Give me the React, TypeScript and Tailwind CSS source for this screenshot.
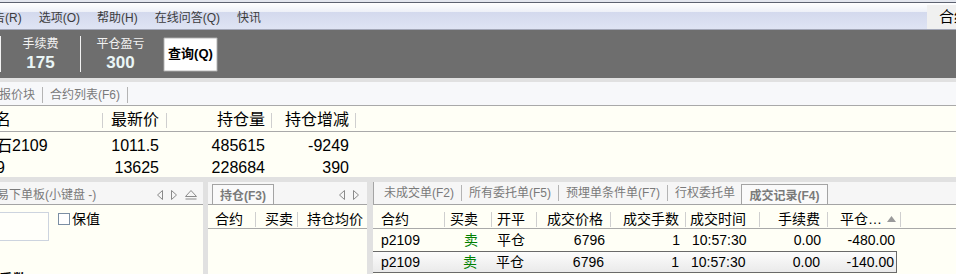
import React from 'react';

const font = "font-['Liberation_Sans','Noto_Sans_CJK_SC',sans-serif]";

// small tab-strip arrows
const ArrowLeft = () => (
  <svg width="6" height="10" viewBox="0 0 6 10" className="shrink-0">
    <polygon points="5.5,0.5 0.5,5 5.5,9.5" fill="none" stroke="#8a8a8a" strokeWidth="1" />
  </svg>
);

const ArrowRight = () => (
  <svg width="6" height="10" viewBox="0 0 6 10" className="shrink-0">
    <polygon points="0.5,0.5 5.5,5 0.5,9.5" fill="none" stroke="#8a8a8a" strokeWidth="1" />
  </svg>
);

const Eject = () => (
  <svg width="12" height="10" viewBox="0 0 12 10" className="shrink-0">
    <polygon points="0.5,6.5 6,0.5 11.5,6.5" fill="none" stroke="#8a8a8a" strokeWidth="1" />
    <line x1="0.5" y1="9" x2="11.5" y2="9" stroke="#8a8a8a" strokeWidth="1" />
  </svg>
);

const SortUp = () => (
  <svg width="9" height="6" viewBox="0 0 9 6" className="shrink-0">
    <polygon points="0,6 4.5,0 9,6" fill="#9a9a9a" />
  </svg>
);

const TabSep = () => <span className="w-px h-[16px] bg-[#b4b4b4] shrink-0" />;
const HeadSep = () => <span className="w-px h-[15px] bg-[#cfcfcf] shrink-0" />;

const menus = ['选项(O)', '帮助(H)', '在线问答(Q)', '快讯'];

const quotes = [
  { name: '石2109', last: '1011.5', oi: '485615', chg: '-9249' },
  { name: '9', last: '13625', oi: '228684', chg: '390' },
];

const trades = [
  { code: 'p2109', side: '卖', oc: '平仓', price: '6796', qty: '1', time: '10:57:30', fee: '0.00', pnl: '-480.00' },
  { code: 'p2109', side: '卖', oc: '平仓', price: '6796', qty: '1', time: '10:57:30', fee: '0.00', pnl: '-140.00' },
];

export default function App() {
  return (
    <div className={`w-[956px] h-[274px] overflow-hidden flex flex-col bg-[#e1e1e1] ${font}`}>
      {/* window top + menu bar */}
      <div className="h-[2px] bg-[#e3e6ee] shrink-0" />
      <div className="h-px bg-[#5d6270] shrink-0" />
      <div className="h-[26px] shrink-0 flex items-center gap-[17px] text-[12px] text-[#3c3c3c] bg-[linear-gradient(to_bottom,#ffffff_0%,#eef1f8_33%,#d3d9ed_34%,#dfe4f4_100%)]">
        <span className="-ml-[7px] pt-[3px] whitespace-nowrap">告(R)</span>
        {menus.map((m) => (
          <span key={m} className="pt-[3px] whitespace-nowrap">{m}</span>
        ))}
        <div className="ml-auto self-start mt-[2px] h-[24px] w-[29px] shrink-0 overflow-hidden bg-[#f0f0f0] pl-[12px] whitespace-nowrap text-[15px] leading-[24px] text-black">
          合约
        </div>
      </div>
      <div className="h-px bg-[#a3a7b7] shrink-0" />

      {/* toolbar */}
      <div className="h-[48px] shrink-0 bg-[#6e6e6e] flex items-center">
        <span className="w-px h-[36px] bg-[#f2f2f2]" />
        <div className="w-[79px] flex flex-col items-center pt-[1px]">
          <span className="text-[12px] leading-[14px] text-[#f2f2f2]">手续费</span>
          <span className="mt-[2px] text-[17px] leading-[20px] font-bold text-[#eaf6f6]">175</span>
        </div>
        <span className="w-px h-[36px] bg-[#f2f2f2]" />
        <div className="w-[79px] flex flex-col items-center pt-[1px]">
          <span className="text-[12px] leading-[14px] text-[#f2f2f2]">平仓盈亏</span>
          <span className="mt-[2px] text-[17px] leading-[20px] font-bold text-[#eaf6f6]">300</span>
        </div>
        <button className="ml-[3px] w-[55px] h-[35px] bg-white border border-[#8c8c8c] rounded-[2px] shadow-[inset_0_0_0_1px_#dcdcdc] text-[13px] font-bold text-black flex items-center justify-center">
          查询(Q)
        </button>
      </div>

      <div className="h-[4px] shrink-0" />

      {/* quote list tabs */}
      <div className="h-[24px] shrink-0 flex items-center gap-[7px] pt-[3px] bg-[#f7f8fa] border-b border-[#a9a9a9] text-[12px] text-[#7a7a7a]">
        <span className="-ml-[1px] whitespace-nowrap">报价块</span>
        <TabSep />
        <span className="whitespace-nowrap">合约列表(F6)</span>
        <TabSep />
      </div>

      {/* quote table */}
      <div className="shrink-0 bg-[#fffff6] text-black">
        <div className="h-[26px] flex items-center pt-[3px] border-b border-[#a9a9a9] text-[16px]">
          <div className="w-[103px] flex items-center">
            <span className="flex-1 -ml-[5px] whitespace-nowrap">名</span>
            <HeadSep />
          </div>
          <div className="w-[64px] flex items-center">
            <span className="flex-1 text-right pr-[7px]">最新价</span>
            <HeadSep />
          </div>
          <div className="w-[105px] flex items-center">
            <span className="flex-1 text-right pr-[6px]">持仓量</span>
            <HeadSep />
          </div>
          <div className="w-[84px] flex items-center">
            <span className="flex-1 text-right pr-[6px]">持仓增减</span>
            <HeadSep />
          </div>
        </div>
        {quotes.map((q, i) => (
          <div key={i} className={`${i === 0 ? 'h-[23px]' : 'h-[22px]'} flex items-center pt-[4px] text-[16px]`}>
            <span className="w-[103px] -ml-[4px] whitespace-nowrap">{q.name}</span>
            <span className="w-[64px] text-right pr-[8px] ml-[4px]">{q.last}</span>
            <span className="w-[105px] text-right pr-[7px]">{q.oi}</span>
            <span className="w-[84px] text-right pr-[7px]">{q.chg}</span>
          </div>
        ))}
      </div>

      <div className="h-[5px] shrink-0" />

      {/* bottom panels */}
      <div className="flex-1 min-h-0 flex">
        {/* order panel */}
        <div className="w-[203px] shrink-0 flex flex-col bg-[#fffff6] overflow-hidden">
          <div className="h-[23px] shrink-0 flex items-center pt-[3px] bg-[#f6f6f6] border-b border-[#a4a4a4] text-[12px] text-[#7a7a7a]">
            <span className="-ml-[3px] whitespace-nowrap">易下单板(小键盘 -)</span>
            <span className="ml-[9px]"><TabSep /></span>
            <div className="ml-auto mr-[6px] flex items-center gap-[8px]">
              <ArrowLeft />
              <ArrowRight />
              <Eject />
            </div>
          </div>
          <div className="flex items-start pt-[7px] shrink-0">
            <div className="w-[50px] h-[29px] -ml-[1px] border border-[#cdd4df] bg-[#fffffa]" />
            <div className="ml-[9px] mt-[1px] w-[12px] h-[12px] border border-[#7b8ea3] bg-white" />
            <span className="ml-[2px] -mt-[1px] text-[14px] leading-[16px] text-black">保值</span>
          </div>
          <span className="mt-[29px] -ml-[1px] shrink-0 text-[14px] leading-[18px] font-bold text-black whitespace-nowrap">手数</span>
        </div>

        <div className="w-[5px] shrink-0" />

        {/* position panel */}
        <div className="w-[159px] shrink-0 flex flex-col bg-[#fffff6] overflow-hidden">
          <div className="h-[23px] shrink-0 flex items-end bg-[#f6f6f6] border-b border-[#a4a4a4]">
            <div className="ml-[4px] h-[20px] w-[62px] pt-[2px] border border-b-0 border-[#a4a4a4] bg-[#fafafa] flex items-center justify-center text-[12px] font-bold text-[#7a7a7a]">
              持仓(F3)
            </div>
            <div className="ml-auto mr-[8px] mb-[4px] flex items-center gap-[8px]">
              <ArrowLeft />
              <ArrowRight />
            </div>
          </div>
          <div className="h-[24px] shrink-0 flex items-center pt-[5px] border-b border-[#a9a9a9] text-[14px] text-black whitespace-nowrap">
            <div className="w-[48px] flex items-center">
              <span className="flex-1 pl-[7px]">合约</span>
              <HeadSep />
            </div>
            <div className="w-[42px] flex items-center">
              <span className="flex-1 pl-[9px]">买卖</span>
              <HeadSep />
            </div>
            <span className="pl-[9px]">持仓均价</span>
          </div>
        </div>

        <div className="w-[6px] shrink-0" />

        {/* trades panel */}
        <div className="flex-1 min-w-0 flex flex-col bg-[#fffff6] overflow-hidden">
          <div className="h-[23px] shrink-0 flex items-end bg-[#f6f6f6] border-b border-l border-[#a4a4a4] text-[12px] text-[#7a7a7a] whitespace-nowrap">
            <div className="mb-[2px] flex items-center gap-[7px] pl-[10px]">
              <span>未成交单(F2)</span>
              <TabSep />
              <span>所有委托单(F5)</span>
              <TabSep />
              <span>预埋单条件单(F7)</span>
              <TabSep />
              <span>行权委托单</span>
            </div>
            <div className="ml-[6px] h-[20px] w-[87px] pt-[2px] border border-b-0 border-[#a4a4a4] bg-[#fafafa] flex items-center justify-center font-bold">
              成交记录(F4)
            </div>
          </div>
          <div className="h-[24px] shrink-0 flex items-center pt-[5px] border-b border-[#a9a9a9] text-[14px] text-black whitespace-nowrap">
            <div className="w-[72px] flex items-center">
              <span className="flex-1 pl-[8px]">合约</span>
              <HeadSep />
            </div>
            <div className="w-[47px] flex items-center">
              <span className="flex-1 pl-[5px]">买卖</span>
              <HeadSep />
            </div>
            <div className="w-[45px] flex items-center">
              <span className="flex-1 pl-[5px]">开平</span>
              <HeadSep />
            </div>
            <div className="w-[74px] flex items-center">
              <span className="flex-1 text-right pr-[7px]">成交价格</span>
              <HeadSep />
            </div>
            <div className="w-[75px] flex items-center">
              <span className="flex-1 text-right pr-[6px]">成交手数</span>
              <HeadSep />
            </div>
            <div className="w-[74px] flex items-center">
              <span className="flex-1 pl-[4px]">成交时间</span>
              <HeadSep />
            </div>
            <div className="w-[68px] flex items-center">
              <span className="flex-1 text-right pr-[7px]">手续费</span>
              <HeadSep />
            </div>
            <div className="w-[73px] flex items-center">
              <span className="flex-1 pl-[12px] flex items-center gap-[5px]">
                平仓…
                <SortUp />
              </span>
              <HeadSep />
            </div>
          </div>
          {trades.map((t, i) => (
            <div
              key={i}
              className={
                i === 1
                  ? 'h-[22px] w-[525px] shrink-0 flex items-center text-[14px] text-black border border-[#6a6a6a] bg-[linear-gradient(to_bottom,#fcfcfc,#eaeaea)] -ml-px'
                  : 'h-[22px] shrink-0 flex items-center text-[14px] text-black'
              }
            >
              <span className={i === 1 ? 'w-[71px] pl-[8px]' : 'w-[72px] pl-[8px]'}>{t.code}</span>
              <span className="w-[47px] pl-[19px] text-[#008000]">{t.side}</span>
              <span className="w-[45px] pl-[5px]">{t.oc}</span>
              <span className="w-[74px] text-right pr-[6px]">{t.price}</span>
              <span className="w-[75px] text-right pr-[6px]">{t.qty}</span>
              <span className="w-[74px] pl-[6px]">{t.time}</span>
              <span className="w-[68px] text-right pr-[7px]">{t.fee}</span>
              <span className="w-[67px] text-right">{t.pnl}</span>
            </div>
          ))}
        </div>
      </div>
    </div>
  );
}
